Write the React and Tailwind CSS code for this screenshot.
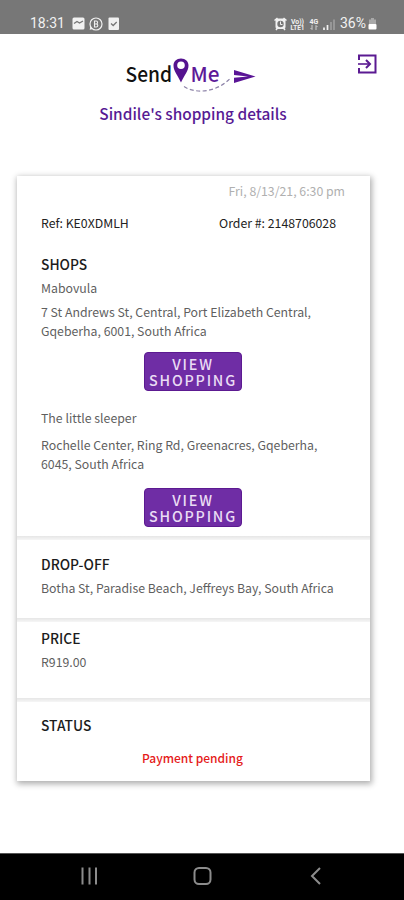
const shops = [
  {
    name: 'Mabovula',
    lines: ['7 St Andrews St, Central, Port Elizabeth Central,', 'Gqeberha, 6001, South Africa'],
    nameClass: 'pt-px h-[25px]',
    linesClass: 'h-[49px]',
  },
  {
    name: 'The little sleeper',
    lines: ['Rochelle Center, Ring Rd, Greenacres, Gqeberha,', '6045, South Africa'],
    nameClass: 'mt-[18px] h-[27px]',
    linesClass: 'h-[52px]',
  },
];

const StatusBar = () => (
  <div className="flex h-[34px] items-start justify-between bg-[#777777] pt-[14px] pr-[27px] pl-[30px] font-['Roboto',sans-serif] text-[#f1f1f1]">
    <div className="flex items-center">
      <span className="w-[42px] text-[14px] leading-[19px]">18:31</span>
      <svg width="48" height="16" viewBox="0 0 48 16">
        <rect x="0.5" y="1.5" width="12" height="12" rx="1.5" fill="#f1f1f1" />
        <path d="M2 7.500l3-2 2.500 1.500 3.500-2" fill="none" stroke="#777777" strokeWidth="1.4" />
        <circle cx="24" cy="8" r="6" fill="none" stroke="#f1f1f1" strokeWidth="1.2" />
        <path d="M18.3 10.5l-.6 3.3 3.2-.7" fill="#f1f1f1" />
        <path d="M22.5 5v6h1.8a1.5 1.5 0 0 0 0-3h-1.8 1.6a1.5 1.5 0 0 0 0-3z" fill="none" stroke="#f1f1f1" strokeWidth="1.1" />
        <rect x="36.5" y="1.5" width="10.5" height="12.5" rx="1" fill="#f1f1f1" />
        <path d="M39 7.5l2.2 2 3.5-3.5" fill="none" stroke="#777777" strokeWidth="1.3" />
      </svg>
    </div>
    <div className="flex items-center">
      <svg width="64" height="16" viewBox="0 0 64 16" className="mr-[2px]">
        <rect x="1.5" y="2.5" width="10" height="10.5" rx="2" fill="#f1f1f1" />
        <path d="M.5 4.5l3-2.5M12.5 4.5l-3-2.5M2 14l1.5-2M11 14l-1.5-2" stroke="#f1f1f1" strokeWidth="1.5" />
        <circle cx="6.5" cy="8" r="3.2" fill="#777777" />
        <path d="M6.5 5.5v3h2" fill="none" stroke="#f1f1f1" strokeWidth="1" />
        <text x="17" y="7.5" fontSize="7" fontWeight="700" fill="#f1f1f1" textLength="13" lengthAdjust="spacingAndGlyphs">Vo))</text>
        <text x="16.5" y="14" fontSize="7" fontWeight="700" fill="#f1f1f1" textLength="14" lengthAdjust="spacingAndGlyphs">LTE1</text>
        <text x="35.5" y="7.5" fontSize="7" fontWeight="700" fill="#f1f1f1">4G</text>
        <path d="M38 9v4.500M36.500 12l1.500 1.500M42 14V9.500M43.500 11L42 9.500" fill="none" stroke="#d0d0d0" strokeWidth="1" />
        <path d="M50 11.500v2.500M53.500 9v5" stroke="#f1f1f1" strokeWidth="1.7" />
        <path d="M57 6v8M60 3.500v10.500" stroke="#a2a2a2" strokeWidth="1.5" />
      </svg>
      <span className="w-[27px] text-[14px] leading-[19px]">36%</span>
      <svg width="9" height="16" viewBox="0 0 9 16" className="ml-px">
        <path d="M3 2h3v1.500h2V8H1V3.500h2z" fill="#a8a8a8" />
        <rect x="0.5" y="8" width="8" height="5.5" rx="1" fill="#ffffff" />
      </svg>
    </div>
  </div>
);

const Logo = () => (
  <svg width="134" height="40" viewBox="0 0 134 40" className="font-['Noto_Sans_CJK_SC','Open_Sans',sans-serif]">
    <text x="0.5" y="28" fontSize="20.5" fontWeight="500" fill="#111111" textLength="46.5" lengthAdjust="spacingAndGlyphs">Send</text>
    <path
      fillRule="evenodd"
      d="M56 4.500c-4.500 0-7.500 3-7.500 7 0 5.800 4.800 10.500 7.500 17 2.700-6.500 7.500-11.200 7.500-17 0-4-3-7-7.500-7zm0 3a3.800 3.800 0 1 1 0 7.600 3.800 3.800 0 0 1 0-7.600z"
      fill="#55138f"
    />
    <text x="65.5" y="28" fontSize="20.5" fontWeight="500" fill="#5d1a98" textLength="29" lengthAdjust="spacingAndGlyphs">Me</text>
    <path d="M59 32.500C70 40 92 39 106 23.500" fill="none" stroke="#8d83a8" strokeWidth="1.2" strokeDasharray="4 2.500" />
    <path d="M109 16l21.500 6.500L109 29v-5.300l14-1.200-14-1.500z" fill="#5a1596" />
  </svg>
);

const ViewButton = () => (
  <button className="mx-auto flex h-[39px] w-[98px] items-start justify-center rounded-[4px] border border-[#5c1a91] bg-[#6f2da5] pt-[3px]">
    <span className="w-[92px] pl-[1px] text-center text-[14.3px] leading-[16px] font-medium tracking-[1.8px] whitespace-normal text-[#eadcf4]">
      VIEW SHOPPING
    </span>
  </button>
);

const Divider = () => <div className="h-[4px] bg-linear-to-b from-[#e6e6e6] to-[#f6f6f6]" />;

const Heading = ({ children }) => (
  <h2 className="h-[24px] text-[13.8px] leading-[20px] font-medium text-[#1c1c1c]">{children}</h2>
);

const NavBar = () => (
  <div className="flex h-[47px] items-center justify-center border-t border-[#555555] bg-black">
    <svg width="404" height="46" viewBox="0 0 404 46" fill="none" stroke="#8c8c8c" strokeWidth="2">
      <path d="M82.500 13.500v17M89.500 13.500v17M96 13.500v17" />
      <rect x="194.5" y="14" width="16" height="16" rx="4.5" />
      <path d="M320 14l-8 8 8 8" />
    </svg>
  </div>
);

const App = () => {
  return (
    <div className="flex h-[900px] w-[404px] flex-col overflow-hidden bg-white font-['Noto_Sans_CJK_SC','Open_Sans',sans-serif] whitespace-nowrap">
      <StatusBar />

      <header className="h-[142px]">
        <div className="flex h-[66px] items-start justify-between pt-[20px] pr-[27px] pl-[125px]">
          <Logo />
          <svg width="20" height="20" viewBox="0 0 20 20" fill="none" stroke="#5b1a92" strokeWidth="2">
            <path d="M2 6V1.500h16.500v17H2V14" />
            <path d="M1 10h11" strokeWidth="1.6" />
            <path d="M9 6l4 4-4 4" />
          </svg>
        </div>
        <h1 className="pr-[18px] text-center text-[15.4px] leading-[27px] font-medium text-[#571a94]">Sindile's shopping details</h1>
      </header>

      <main className="ml-[17px] h-[605px] w-[353px] bg-white text-[12.3px] text-[#5f5f5f] shadow-[1px_2px_6px_1px_rgba(0,0,0,0.32)]">
        <section className="h-[360px] pt-[6px]">
          <div className="flex h-[32px] justify-end pr-[25px] leading-[18px] text-[#b0b0b0]">Fri, 8/13/21, 6:30 pm</div>
          <div className="flex h-[40px] justify-between pr-[34px] pl-[24px] leading-[18px] text-[#222222]">
            <span>Ref: KE0XDMLH</span>
            <span>Order #: 2148706028</span>
          </div>
          <div className="pr-[26px] pl-[24px]">
            <Heading>SHOPS</Heading>
            {shops.map((shop) => (
              <div key={shop.name} className="leading-[19px]">
                <div className={shop.nameClass}>{shop.name}</div>
                <div className={shop.linesClass}>
                  {shop.lines.map((line) => (
                    <p key={line}>{line}</p>
                  ))}
                </div>
                <ViewButton />
              </div>
            ))}
          </div>
        </section>
        <Divider />
        <section className="h-[78px] px-[24px] pt-[14px]">
          <Heading>DROP-OFF</Heading>
          <p className="pt-px leading-[19px]">Botha St, Paradise Beach, Jeffreys Bay, South Africa</p>
        </section>
        <Divider />
        <section className="h-[76px] px-[24px] pt-[6px]">
          <Heading>PRICE</Heading>
          <p className="pt-px leading-[19px]">R919.00</p>
        </section>
        <Divider />
        <section className="px-[24px] pt-[13px]">
          <Heading>STATUS</Heading>
          <p className="pt-[9px] pl-[101px] text-[12px] leading-[19px] font-medium text-[#e51a1a]">Payment pending</p>
        </section>
      </main>

      <div className="flex-1" />
      <NavBar />
    </div>
  );
};

export default App;
